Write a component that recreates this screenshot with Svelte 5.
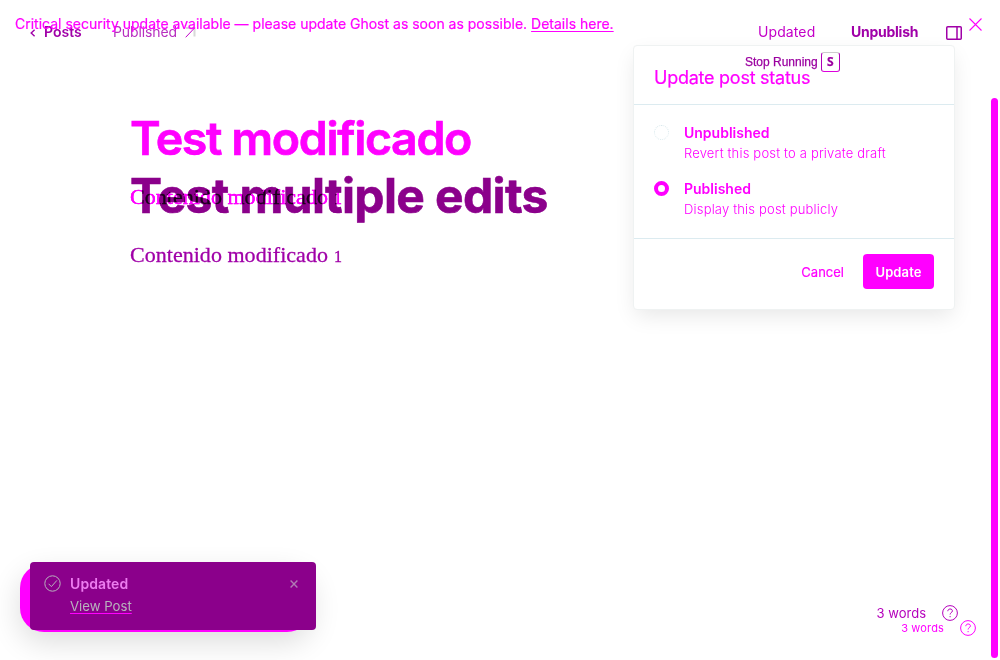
<script>
  const options = [
    { title: 'Unpublished', note: 'Revert this post to a private draft', on: false },
    { title: 'Published', note: 'Display this post publicly', on: true }
  ];
</script>

<div class="page">
  <header class="bar">
    <svg class="back" width="6" height="8" viewBox="0 0 6 8"><path d="M4.6 .8 1.2 4l3.4 3.2" /></svg>
    <span class="posts">Posts</span>
    <span class="state">Published</span>
    <svg class="out" width="11" height="11" viewBox="0 0 11 11"><path class="edge" d="M1 1h8.5v8.5" /><path d="M.7 10.3 9.5 1" /></svg>
    <span class="updated">Updated</span>
    <span class="unpublish">Unpublish</span>
    <svg class="panel" width="16" height="14" viewBox="0 0 16 14"><rect x=".75" y=".75" width="14.5" height="12.5" rx="1" /><path d="M11 .5v13" /></svg>
  </header>

  <main class="editor">
    <h1 class="first">Test modificado</h1>
    <div class="stack">
      <p class="under"><span data-text="Contenido modificado">Contenido modificado</span><i data-text="1">1</i></p>
      <h1 class="second">Test multiple edits</h1>
    </div>
    <p class="body"><span>Contenido modificado</span><i>1</i></p>
  </main>

  <div class="banner">
    <span>Critical security update available — please update Ghost as soon as possible.</span><a>Details here.</a>
    <svg width="13" height="13" viewBox="0 0 13 13"><path d="M.5 .5l12 12M12.5 .5l-12 12" /></svg>
  </div>

  <section class="modal">
    <h2>Update post status</h2>
    <div class="choices">
      {#each options as o}
        <div class="choice">
          <span class="radio" class:on={o.on}></span>
          <div><b>{o.title}</b><small>{o.note}</small></div>
        </div>
      {/each}
    </div>
    <footer><span>Cancel</span><button>Update</button></footer>
  </section>

  <div class="stop"><span>Stop Running</span><kbd>S</kbd></div>

  <div class="toast-back"></div>
  <aside class="toast">
    <svg class="check" width="17" height="17" viewBox="0 0 17 17"><circle cx="8.5" cy="8.5" r="7.7" /><path d="M4.6 8.8l2.8 2.8 5.5-6.2" /></svg>
    <div class="message"><b>Updated</b><a>View Post</a></div>
    <svg class="dismiss" width="8" height="8" viewBox="0 0 8 8"><path d="M.6 .6l6.8 6.8M7.4 .6.6 7.4" /></svg>
  </aside>

  {#each ['near', 'far'] as place}
    <div class="words {place}">
      <span>3 words</span>
      <svg width="16" height="16" viewBox="0 0 16 16"><circle cx="8" cy="8" r="7.4" /><path d="M5.8 6.2c0-3 4.6-2.9 4.6-.3 0 1.8-2.3 1.7-2.3 3.6M8.1 11v1.2" /></svg>
    </div>
  {/each}

  <div class="scroll"></div>
</div>

<style>
  :global(body) { margin: 0; background: #fff; overflow: hidden; }
  .page { position: relative; width: 1000px; height: 660px; overflow: hidden; background: #fff; font-family: Inter, sans-serif; color: #f0f; }
  svg { fill: none; stroke: currentColor; flex: none; display: block; }
  h1, h2, p { margin: 0; white-space: nowrap; }
  span, a, b, small { white-space: nowrap; }

  .bar { display: flex; align-items: center; height: 66px; box-sizing: border-box; padding: 0 38px 0 30px; font-size: 14px; color: #a000a8; }
  .bar span { margin-top: -3px; }
  .back { stroke-width: 1.4; }
  .posts { margin-left: 8px; width: 69px; font-weight: 600; }
  .state { width: 72px; font-weight: 400; color: #b82fc0; letter-spacing: -.1px; }
  .out { color: #c000c8; stroke-width: 1; margin-top: -2px; }
  .edge { stroke: #d8d8d8; stroke-width: 2; }
  .bar .updated { margin-left: auto; width: 93px; color: #c400c8; letter-spacing: .1px; }
  .unpublish { width: 95px; font-weight: 700; letter-spacing: -.25px; }
  .panel { stroke-width: 1.5; }

  .editor { padding-left: 130px; }
  h1 { height: 58px; font-size: 48px; line-height: 58px; }
  .first { margin-top: 43px; font-size: 46.5px; font-weight: 600; letter-spacing: -1.38px; -webkit-text-stroke: .7px #f0f; }
  .stack { display: grid; height: 58px; }
  .stack > * { grid-area: 1 / 1; }
  .second { position: relative; color: #8b008b; font-weight: 700; letter-spacing: -.64px; -webkit-text-stroke: .6px #8b008b; }
  p { display: flex; align-items: baseline; gap: 6px; font: 22px/28px "Liberation Serif", serif; letter-spacing: .03px; -webkit-text-stroke: .3px; }
  p i { font-style: normal; font-size: 16px; }
  .under { margin-top: 16px; }
  .under span, .under i { position: relative; }
  .under span::after, .under i::after { content: attr(data-text); position: absolute; left: 0; top: 0; z-index: 1; color: #808080; mix-blend-mode: color-burn; }
  .body { margin-top: 16px; color: #a000a8; }

  .banner { position: absolute; left: 15px; right: 18px; top: 14px; height: 20px; display: flex; align-items: center; font-size: 14px; line-height: 20px; -webkit-text-stroke: .2px #f0f; }
  .banner a { margin-left: 4px; text-decoration: underline; text-underline-offset: 2px; }
  .banner svg { margin-left: auto; stroke-width: 1.1; color: #f0f; }

  .modal { position: absolute; left: 633px; top: 45px; width: 320px; height: 263px; background: #fff; border: 1px solid #eff2f2; border-radius: 4px; box-shadow: 0 8px 22px -3px rgba(0,0,0,.1); }
  h2 { display: flex; align-items: center; height: 59px; box-sizing: border-box; padding: 4px 20px 0; border-bottom: 1px solid #dcebf0; font-size: 18px; font-weight: 400; letter-spacing: -.25px; -webkit-text-stroke: .2px #f0f; }
  .choices { height: 133px; padding: 0 20px; border-bottom: 1px solid #dcebf0; }
  .choice { display: flex; gap: 15px; padding-top: 18px; height: 38px; }
  .choice b, .choice small { display: block; line-height: 20px; }
  .choice b { font-size: 14px; font-weight: 600; }
  .choice small { font-size: 13px; font-weight: 300; letter-spacing: .18px; }
  .radio { width: 15px; height: 15px; margin-top: 2px; box-sizing: border-box; border: 1px dotted #d8e8ec; border-radius: 50%; }
  .radio.on { border: 4.5px solid #f0f; }
  footer { display: flex; justify-content: flex-end; align-items: center; gap: 19px; padding: 15px 20px 0; height: 35px; font-size: 13px; }
  footer span { -webkit-text-stroke: .2px #f0f; }
  button { width: 71px; height: 35px; border: 0; border-radius: 4px; padding: 0; background: #f0f; color: #fff; font: 600 13px Inter, sans-serif; letter-spacing: .1px; }

  .stop { position: absolute; left: 745px; top: 52px; height: 20px; display: flex; align-items: center; gap: 3px; color: #9b00a0; font: 12px "Liberation Sans", sans-serif; -webkit-text-stroke: .25px; }
  kbd { width: 17px; height: 18px; border: 1px solid #b000b8; border-top-color: #ccc; border-bottom-color: #d0d; border-radius: 3px; font: 700 12px/17px "Open Sans", sans-serif; text-align: center; }

  .toast-back { position: absolute; left: 20px; top: 564px; width: 291px; height: 68px; border-radius: 24px; background: #f0f; box-shadow: 0 10px 30px rgba(0,0,0,.14); }
  .toast { position: absolute; left: 30px; top: 562px; width: 286px; height: 68px; box-sizing: border-box; padding: 13px 18px 0 14px; display: flex; background: #8b008b; border-radius: 4px; color: #b8b3bd; }
  .message { margin-left: 9px; flex: 1; }
  .message b, .message a { display: block; width: max-content; }
  .message b { line-height: 18px; font-size: 14px; font-weight: 600; color: #ed7cf0; letter-spacing: .1px; }
  .message a { margin-top: 4px; font-size: 13.2px; line-height: 18px; text-decoration: underline; text-decoration-color: #f0f; text-underline-offset: 2px; }
  .dismiss { margin-top: 5px; stroke-width: 1.4; color: #b07ab4; }

  .words { position: absolute; right: 42px; top: 605px; display: flex; align-items: center; gap: 16px; height: 16px; font-size: 13px; color: #b500bc; }
  .words span { margin-top: -1px; }
  .far { right: 24px; top: 620px; font-size: 11px; letter-spacing: .15px; color: #f0f; }
  .scroll { position: absolute; left: 991px; top: 98px; width: 7px; height: 560px; border-radius: 3.5px; background: #f0f; }
</style>
